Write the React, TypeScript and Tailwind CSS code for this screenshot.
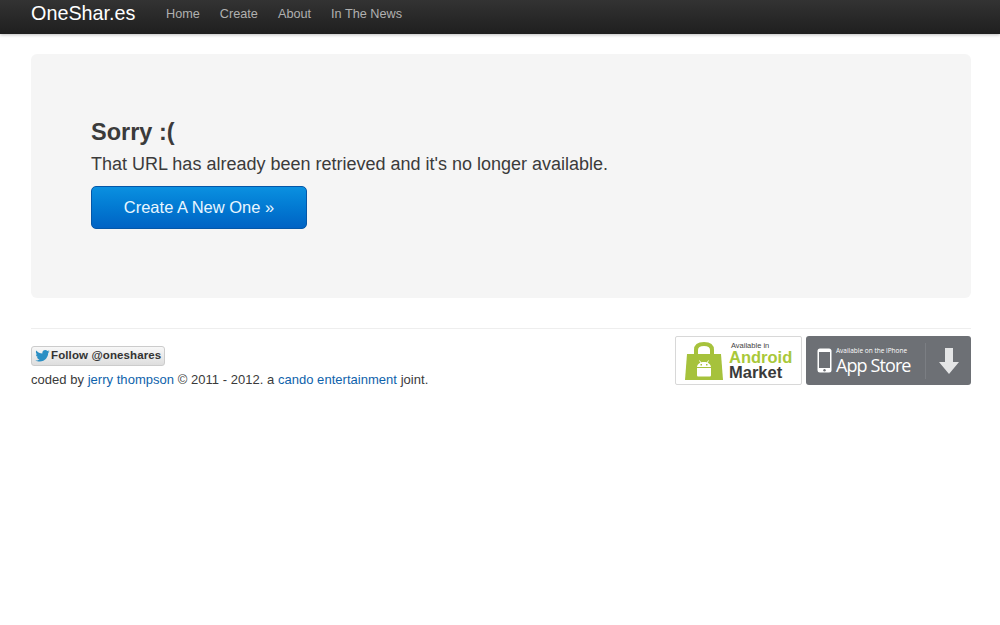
import React from "react";

function Twitter() {
  return (
    <svg width="15" height="12" viewBox="0 0 24 20" className="shrink-0">
      <path fill="#2b8fc4" d="M24 2.400c-.9.400-1.800.700-2.800.800 1-.600 1.800-1.600 2.200-2.700-1 .600-2 1-3.100 1.200C19.300.700 18 0 16.600 0c-2.700 0-4.900 2.200-4.900 4.900 0 .400 0 .800.100 1.100C7.700 5.800 4.100 3.900 1.700.900c-.400.700-.700 1.600-.700 2.500 0 1.700.900 3.200 2.200 4.100-.800 0-1.600-.200-2.200-.600v.100c0 2.400 1.700 4.400 3.900 4.800-.400.100-.800.200-1.300.200-.300 0-.600 0-.900-.100.600 2 2.400 3.400 4.600 3.400-1.700 1.300-3.800 2.100-6.100 2.100-.400 0-.800 0-1.200-.100C2.200 18.300 4.800 19.200 7.500 19.200c9.100 0 14-7.500 14-14v-.600c1-.700 1.800-1.500 2.500-2.200z" />
    </svg>
  );
}

function AndroidBadge() {
  return (
    <div className="w-[127px] h-[49px] bg-white border border-[#d8d8d8] rounded-[2px] flex items-center pl-[9px] shrink-0">
      <svg width="38" height="40" viewBox="0 0 38 40" className="shrink-0">
        <path fill="none" stroke="#a6c23c" strokeWidth="4" d="M11 16V9c0-4 3-6 8-6s8 2 8 6v7" />
        <path fill="#a6c23c" d="M2 13h34l2 26H0z" />
        <path fill="#fff" d="M12 26c.500-3.500 3.500-5 7-5s6.500 1.500 7 5zM12 27h14v7c0 1-.500 1.500-1.500 1.500h-11c-1 0-1.500-.500-1.500-1.500z" />
        <path stroke="#fff" strokeWidth="1" d="M14.500 19.500l1.500 2.500M23.500 19.500L22 22" />
        <path fill="#a6c23c" d="M15.500 23h1.500v1.500h-1.500zM21 23h1.500v1.500H21z" />
      </svg>
      <div className="flex flex-col ml-[6px] font-['Liberation_Sans',Arial,sans-serif]">
        <span className="text-[7.500px] leading-[8px] text-[#444] mt-[1px] ml-[2px] whitespace-nowrap">Available in</span>
        <span className="text-[16.500px] leading-[15px] font-bold text-[#a9c83a]">Android</span>
        <span className="text-[16.500px] leading-[15px] font-bold text-[#3a3a3a]">Market</span>
      </div>
    </div>
  );
}

function AppStoreBadge() {
  return (
    <div className="w-[165px] h-[49px] bg-[#6d7075] rounded-[3px] flex items-center pl-[11px] shrink-0">
      <svg width="15" height="25" viewBox="0 0 15 25" className="shrink-0">
        <rect x="0.500" y="0.500" width="14" height="24" rx="2.500" fill="#fff" />
        <rect x="2" y="4" width="11" height="16" fill="#6d7075" />
        <circle cx="7.500" cy="22.300" r="1.200" fill="#6d7075" />
      </svg>
      <div className="flex flex-col ml-[4px] w-[89px] font-['Open_Sans',sans-serif] text-white">
        <span className="text-[6.500px] leading-[8px] mt-[1px] whitespace-nowrap">Available on the iPhone</span>
        <span className="text-[18px] leading-[20px] tracking-[-0.9px] whitespace-nowrap">App Store</span>
      </div>
      <div className="w-px h-[36px] bg-[#7b7e83]" />
      <svg width="20" height="26" viewBox="0 0 20 26" className="ml-[13px] shrink-0">
        <path fill="#e4e5e6" d="M6 0h8v14h6L10 26 0 14h6z" />
      </svg>
    </div>
  );
}

export default function App() {
  return (
    <div className="min-h-[625px] bg-white font-['Liberation_Sans',Arial,sans-serif] text-[#333]">
      <nav className="h-[34px] bg-gradient-to-b from-[#333333] to-[#1f1f1f] shadow-[0_1px_3px_rgba(0,0,0,0.25)] flex items-start pl-[31px] pr-[29px]">
        <a className="text-[19.800px] leading-[26px] text-white w-[135px]">OneShar.es</a>
        <div className="flex gap-[20px] text-[12.700px] leading-[26px] mt-[1px] text-[#b0b0b0]">
          <a>Home</a>
          <a>Create</a>
          <a>About</a>
          <a>In The News</a>
        </div>
      </nav>

      <main className="pl-[31px] pr-[29px] pt-[20px]">
        <section className="h-[244px] bg-[#f5f5f5] rounded-[6px] pl-[60px] pt-[62px]">
          <h1 className="text-[23.500px] leading-[32px] font-bold text-[#3b3b3b]">Sorry :(</h1>
          <p className="text-[18px] leading-[32px] text-[#3b3b3b]">That URL has already been retrieved and it's no longer available.</p>
          <a className="mt-[6px] w-[216px] h-[43px] flex items-center justify-center rounded-[5px] border border-[#0457a8] bg-gradient-to-b from-[#0b90e0] to-[#0163c4] text-[#e8f6ff] text-[16.500px]">
            Create A New One »
          </a>
        </section>

        <footer className="mt-[30px] border-t border-[#eeeeee] pt-[7px] flex justify-between">
          <div className="pt-[10px]">
            <a className="w-[134px] h-[20px] flex items-center gap-[1px] pl-[3px] bg-gradient-to-b from-[#f8f8f8] to-[#dedede] border border-[#cccccc] rounded-[3px] text-[11.500px] font-bold text-[#333]">
              <Twitter />
              <span className="tracking-[0.12px] whitespace-nowrap">Follow @oneshares</span>
            </a>
            <p className="text-[13px] leading-[18px] mt-[5px] tracking-[0.03px] text-[#3a3a3a]">
              coded by <a className="text-[#0e62ab]">jerry thompson</a> © 2011 - 2012. a <a className="text-[#0e62ab]">cando entertainment</a> joint.
            </p>
          </div>
          <div className="flex gap-[4px]">
            <AndroidBadge />
            <AppStoreBadge />
          </div>
        </footer>
      </main>
    </div>
  );
}
